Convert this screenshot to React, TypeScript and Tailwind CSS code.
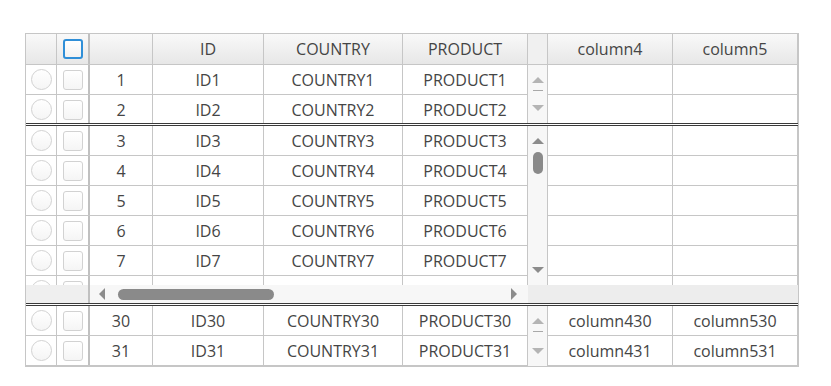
const LINE = "border-[#c6c6c6]";

const cols = [
  { key: "num", w: "w-[63px]" },
  { key: "id", w: "w-[111px]" },
  { key: "country", w: "w-[139px]" },
  { key: "product", w: "w-[125px]" },
];

function Radio() {
  return (
    <div className="w-[21px] h-[21px] rounded-full border border-[#d2d2d2] bg-gradient-to-b from-white to-[#f5f5f5]" />
  );
}

function Check({ focused = false }: { focused?: boolean }) {
  if (focused) {
    return (
      <div className="w-[20px] h-[20px] rounded-[3px] border-2 border-[#2f8fd8] bg-gradient-to-b from-white to-[#f2f2f2]" />
    );
  }
  return (
    <div className="w-[20px] h-[20px] rounded-[3px] border border-[#d2d2d2] bg-gradient-to-b from-white to-[#f5f5f5]" />
  );
}

function Cell({ w, children, last = false }: { w: string; children?: React.ReactNode; last?: boolean }) {
  return (
    <div className={`${w} shrink-0 h-full flex items-center justify-center ${last ? "" : "border-r"} ${LINE}`}>
      {children}
    </div>
  );
}

function FrozenCells() {
  return (
    <>
      <Cell w="w-[31px]">
        <Radio />
      </Cell>
      <div className="w-[33px] shrink-0 h-full flex items-center justify-center border-r-2 border-[#c0c0c0]">
        <Check />
      </div>
    </>
  );
}

function LeftRow({ n }: { n: number | null }) {
  return (
    <div className={`h-[30px] shrink-0 flex border-b ${LINE}`}>
      <FrozenCells />
      {n === null ? (
        cols.map((c) => <Cell key={c.key} w={c.w} />)
      ) : (
        <>
          <Cell w="w-[63px]">{n}</Cell>
          <Cell w="w-[111px]">ID{n}</Cell>
          <Cell w="w-[139px]">COUNTRY{n}</Cell>
          <Cell w="w-[125px]">PRODUCT{n}</Cell>
        </>
      )}
    </div>
  );
}

function RightRow({ n, filled }: { n: number; filled?: boolean }) {
  return (
    <div className={`h-[30px] shrink-0 flex border-b ${LINE}`}>
      <Cell w="w-[125px]">{filled ? `column4${n}` : null}</Cell>
      <Cell w="w-[125px]">{filled ? `column5${n}` : null}</Cell>
    </div>
  );
}

function Arrow({ dir, color }: { dir: "up" | "down" | "left" | "right"; color: string }) {
  const pts = {
    up: "0,6 6,0 12,6",
    down: "0,0 12,0 6,6",
    left: "6,0 6,12 0,6",
    right: "0,0 0,12 6,6",
  }[dir];
  const vertical = dir === "up" || dir === "down";
  return (
    <svg width={vertical ? 12 : 6} height={vertical ? 6 : 12} viewBox={vertical ? "0 0 12 6" : "0 0 6 12"}>
      <polygon points={pts} fill={color} />
    </svg>
  );
}

function VScroll({ active }: { active?: boolean }) {
  if (active) {
    return (
      <div className={`w-[20px] shrink-0 h-full flex flex-col items-center border-r ${LINE} bg-[#f7f7f7]`}>
        <div className="pt-[12px]">
          <Arrow dir="up" color="#8c8c8c" />
        </div>
        <div className="mt-[8px] w-[10px] h-[22px] rounded-full bg-[#8a8a8a]" />
        <div className="flex-1" />
        <div className="pb-[12px]">
          <Arrow dir="down" color="#8c8c8c" />
        </div>
      </div>
    );
  }
  return (
    <div className={`w-[20px] shrink-0 h-full flex flex-col items-center border-r ${LINE} bg-[#f7f7f7]`}>
      <div className="pt-[12px]">
        <Arrow dir="up" color="#b4b4b4" />
      </div>
      <div className="mt-[7px] w-[10px] h-px bg-[#a8a8a8]" />
      <div className="flex-1" />
      <div className="pb-[12px]">
        <Arrow dir="down" color="#b4b4b4" />
      </div>
    </div>
  );
}

function Divider() {
  return <div className="h-[3px] shrink-0 border-y border-[#3a3a3a] bg-white" />;
}

export default function App() {
  return (
    <div className="w-[831px] h-[386px] bg-white pt-[33px] pl-[25px] text-[16px] text-[#454545]" style={{ fontFamily: '"Open Sans", sans-serif' }}>
      <div className={`w-[774px] border ${LINE} flex flex-col`}>
        {/* header */}
        <div className={`h-[31px] flex border-b ${LINE} bg-gradient-to-b from-[#f9f9f9] to-[#e7e7e7]`}>
          <Cell w="w-[31px]" />
          <div className="w-[33px] shrink-0 h-full flex items-center justify-center border-r-2 border-[#c0c0c0]">
            <Check focused />
          </div>
          <Cell w="w-[63px]" />
          <Cell w="w-[111px]">ID</Cell>
          <Cell w="w-[139px]">COUNTRY</Cell>
          <Cell w="w-[125px]">PRODUCT</Cell>
          <div className={`w-[20px] shrink-0 h-full border-r ${LINE} bg-[#f0f0f0]`} />
          <Cell w="w-[125px]">column4</Cell>
          <Cell w="w-[125px]">column5</Cell>
        </div>

        {/* top fixed rows */}
        <div className="h-[58px] flex overflow-hidden">
          <div className="flex flex-col">
            <LeftRow n={1} />
            <LeftRow n={2} />
          </div>
          <VScroll />
          <div className="flex flex-col">
            <RightRow n={1} />
            <RightRow n={2} />
          </div>
        </div>
        <Divider />

        {/* scrolling middle */}
        <div className="flex flex-col">
          <div className="h-[159px] flex overflow-hidden">
            <div className="flex flex-col">
              {[3, 4, 5, 6, 7].map((n) => (
                <LeftRow key={n} n={n} />
              ))}
              <LeftRow n={null} />
            </div>
            <VScroll active />
            <div className="flex flex-col">
              {[3, 4, 5, 6, 7, 8].map((n) => (
                <RightRow key={n} n={n} />
              ))}
            </div>
          </div>
          <div className="h-[18px] flex bg-[#f0f0f0]">
            <div className="w-[64px] shrink-0 h-full border-r-2 border-[#c0c0c0] bg-[#efefef]" />
            <div className="w-[438px] shrink-0 h-full flex items-center bg-[#f7f7f7] pl-[9px] pr-[11px]">
              <Arrow dir="left" color="#8c8c8c" />
              <div className="ml-[13px] w-[156px] h-[11px] rounded-full bg-[#8a8a8a]" />
              <div className="flex-1" />
              <Arrow dir="right" color="#8c8c8c" />
            </div>
            <div className="flex-1 h-full bg-[#ededed]" />
          </div>
        </div>
        <Divider />

        {/* bottom fixed rows */}
        <div className="h-[60px] flex overflow-hidden">
          <div className="flex flex-col">
            <LeftRow n={30} />
            <LeftRow n={31} />
          </div>
          <VScroll />
          <div className="flex flex-col">
            <RightRow n={30} filled />
            <RightRow n={31} filled />
          </div>
        </div>
      </div>
    </div>
  );
}
